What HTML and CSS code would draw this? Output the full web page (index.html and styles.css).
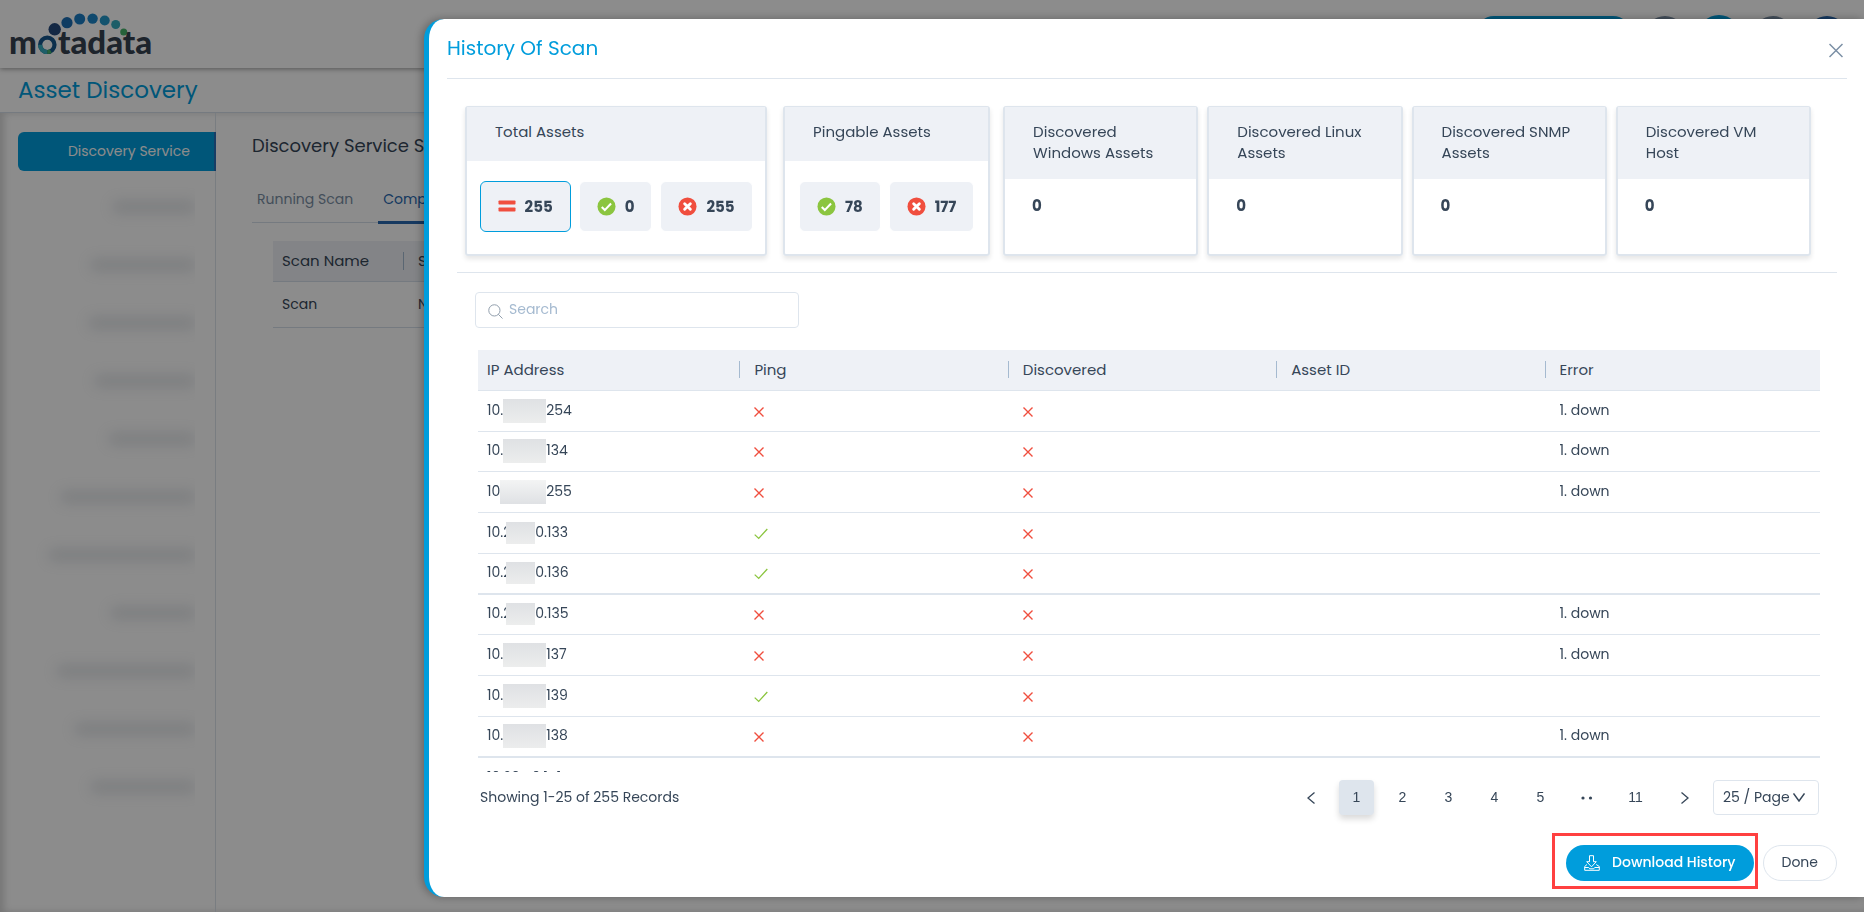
FILE: index.html
```html
<!DOCTYPE html>
<html lang="en">
<head>
<meta charset="utf-8">
<title>Asset Discovery</title>
<link rel="stylesheet" href="styles.css">
</head>
<body>
<svg class="sprite" aria-hidden="true">
  <symbol id="i-x" viewBox="1 1 10 10"><path d="M1.500 1.500l9 9M10.500 1.500l-9 9" fill="none" stroke="currentColor" stroke-width="1.400"/></symbol>
  <symbol id="i-check" viewBox="0 0 14 12"><path d="M.7 6.600l4 3.800L13.300 1" fill="none" stroke="currentColor" stroke-width="1.300"/></symbol>
  <symbol id="i-ok" viewBox="0 0 20 20"><circle cx="10" cy="10" r="9.500" fill="#8bc53f"/><path d="M5 10.600l3.200 3.200 6.600-7" fill="none" stroke="#fff" stroke-width="2.200"/></symbol>
  <symbol id="i-bad" viewBox="0 0 20 20"><circle cx="10" cy="10" r="9.500" fill="#f04e3e"/><path d="M7 7l6 6M13 7l-6 6" fill="none" stroke="#fff" stroke-width="3" stroke-linecap="round"/></symbol>
  <symbol id="i-eq" viewBox="0 0 18 12"><rect x=".5" y=".5" width="17" height="4" rx=".8" fill="#f04e3e"/><rect x=".5" y="7.500" width="17" height="4" rx=".8" fill="#f04e3e"/></symbol>
</svg>

<div class="app">
  <header class="topbar">
    <svg class="logo" viewBox="0 0 150 48" role="img" aria-label="motadata">
      <circle cx="45.700" cy="21.300" r="6.200" fill="#264a7c"/><circle cx="58" cy="14.700" r="5.600" fill="#1c6db3"/>
      <circle cx="70.700" cy="11" r="5.500" fill="#1b7cc4"/><circle cx="83.600" cy="10.600" r="5.200" fill="#1d86c8"/>
      <circle cx="95.700" cy="12.500" r="5" fill="#2497c9"/><circle cx="106.700" cy="16.500" r="4.500" fill="#35abbd"/>
      <circle cx="114.700" cy="24" r="3.500" fill="#45b26b"/>
      <text class="logo-text" x="0" y="46">m</text>
      <circle cx="38.300" cy="36.800" r="7.200" fill="none" stroke="#17568c" stroke-width="4.200"/>
      <path d="M31.100 36.800a7.200 7.200 0 0 0 7.200 7.200" fill="none" stroke="#35abbd" stroke-width="4.200"/>
      <path d="M38.300 44a7.200 7.200 0 0 0 3.500-.9" fill="none" stroke="#45b26b" stroke-width="4.200"/>
      <text class="logo-text" x="49" y="46">tadata</text>
    </svg>
    <div class="tools"><span class="pill"></span><span class="dot slate"></span><span class="dot teal"></span><span class="dot slate"></span><span class="dot navy"></span></div>
  </header>
  <h1 class="page-title">Asset Discovery</h1>
  <div class="body">
    <nav class="side">
      <a class="side-active" href="#">Discovery Service</a>
      <ul class="veiled">
        <li style="width:82px"></li><li style="width:104px"></li><li style="width:106px"></li><li style="width:100px"></li><li style="width:86px"></li><li style="width:134px"></li><li style="width:146px"></li><li style="width:84px"></li><li style="width:138px"></li><li style="width:120px"></li><li style="width:104px"></li>
      </ul>
    </nav>
    <main class="content">
      <h2>Discovery Service Scan</h2>
      <div class="tabs"><a href="#">Running Scan</a><a class="on" href="#">Completed Scan</a></div>
      <table class="scans">
        <thead><tr><th>Scan Name</th><th>Status</th></tr></thead>
        <tbody><tr><td>Scan</td><td>New</td></tr></tbody>
      </table>
    </main>
  </div>
</div>
<div class="shade"></div>

<section class="drawer" role="dialog" aria-labelledby="drawer-title">
  <header class="drawer-head">
    <h2 id="drawer-title">History Of Scan</h2>
    <button class="close" aria-label="Close"><svg viewBox="0 0 14 14"><path d="M.5 .5l13 13M13.500 .5l-13 13" fill="none" stroke="currentColor" stroke-width="1.500"/></svg></button>
  </header>

  <div class="cards">
    <article class="card total"><h3>Total Assets</h3><div class="chips">
      <button class="chip on"><svg class="eq"><use href="#i-eq"/></svg>255</button>
      <button class="chip"><svg><use href="#i-ok"/></svg>0</button>
      <button class="chip"><svg><use href="#i-bad"/></svg>255</button></div></article>
    <article class="card pingable"><h3>Pingable Assets</h3><div class="chips">
      <button class="chip"><svg><use href="#i-ok"/></svg>78</button>
      <button class="chip"><svg><use href="#i-bad"/></svg>177</button></div></article>
    <article class="card"><h3>Discovered Windows Assets</h3><p>0</p></article>
    <article class="card"><h3>Discovered Linux Assets</h3><p>0</p></article>
    <article class="card"><h3>Discovered SNMP Assets</h3><p>0</p></article>
    <article class="card"><h3>Discovered VM Host</h3><p>0</p></article>
  </div>

  <div class="records">
    <label class="search"><svg viewBox="0 0 16 16"><circle cx="6.800" cy="6.800" r="6" fill="none" stroke="currentColor"/><path d="M11 11l4.500 4.500" stroke="currentColor" fill="none"/></svg><input type="text" placeholder="Search" aria-label="Search"></label>

    <div class="table-wrap">
      <table class="grid">
        <thead><tr><th>IP Address</th><th>Ping</th><th>Discovered</th><th>Asset ID</th><th>Error</th></tr></thead>
        <tbody>
          <tr><td>10.<i class="veil"></i>254</td><td><svg class="no"><use href="#i-x"/></svg></td><td><svg class="no"><use href="#i-x"/></svg></td><td></td><td>1. down</td></tr>
          <tr><td>10.<i class="veil"></i>134</td><td><svg class="no"><use href="#i-x"/></svg></td><td><svg class="no"><use href="#i-x"/></svg></td><td></td><td>1. down</td></tr>
          <tr><td>10<i class="veil wide"></i>255</td><td><svg class="no"><use href="#i-x"/></svg></td><td><svg class="no"><use href="#i-x"/></svg></td><td></td><td>1. down</td></tr>
          <tr><td>10.2<i class="veil short"></i>0.133</td><td><svg class="yes"><use href="#i-check"/></svg></td><td><svg class="no"><use href="#i-x"/></svg></td><td></td><td></td></tr>
          <tr><td>10.2<i class="veil short"></i>0.136</td><td><svg class="yes"><use href="#i-check"/></svg></td><td><svg class="no"><use href="#i-x"/></svg></td><td></td><td></td></tr>
          <tr><td>10.2<i class="veil short"></i>0.135</td><td><svg class="no"><use href="#i-x"/></svg></td><td><svg class="no"><use href="#i-x"/></svg></td><td></td><td>1. down</td></tr>
          <tr><td>10.<i class="veil"></i>137</td><td><svg class="no"><use href="#i-x"/></svg></td><td><svg class="no"><use href="#i-x"/></svg></td><td></td><td>1. down</td></tr>
          <tr><td>10.<i class="veil"></i>139</td><td><svg class="yes"><use href="#i-check"/></svg></td><td><svg class="no"><use href="#i-x"/></svg></td><td></td><td></td></tr>
          <tr><td>10.<i class="veil"></i>138</td><td><svg class="no"><use href="#i-x"/></svg></td><td><svg class="no"><use href="#i-x"/></svg></td><td></td><td>1. down</td></tr>
          <tr><td>10.20.40.141</td><td></td><td></td><td></td><td></td></tr>
        </tbody>
      </table>
    </div>

    <div class="pager">
      <span class="count">Showing 1-25 of 255 Records</span>
      <div class="pages">
        <button aria-label="Previous page"><svg viewBox="0 0 8 12"><path d="M7.500 .5L1 6l6.500 5.500" fill="none" stroke="currentColor" stroke-width="1.300"/></svg></button>
        <button class="on">1</button><button>2</button><button>3</button><button>4</button><button>5</button>
        <button aria-label="More pages"><svg class="more" viewBox="0 0 12 4"><circle cx="2" cy="2" r="1.600" fill="currentColor"/><circle cx="9.500" cy="2" r="1.600" fill="currentColor"/></svg></button>
        <button class="last">11</button>
        <button aria-label="Next page"><svg viewBox="0 0 8 12"><path d="M.5 .5L7 6 .5 11.500" fill="none" stroke="currentColor" stroke-width="1.300"/></svg></button>
      </div>
      <div class="size"><select aria-label="Page size"><option>25 / Page</option></select><svg viewBox="0 0 12 9"><path d="M.5 .5L6 8 11.500 .5" fill="none" stroke="currentColor" stroke-width="1.500"/></svg></div>
    </div>
  </div>

  <footer class="actions">
    <div class="marked"><button class="download"><svg viewBox="0 0 16 16"><path d="M5.500 .7h4v6h2.800L7.500 11.800 2.700 6.700h2.800zM3 9.500L.7 11.500v3.800h14.600v-3.800L12.200 9.500M.7 12.500h4l1 1.300h4l1-1.300h4.600" fill="none" stroke="currentColor"/></svg>Download History</button></div>
    <button class="done">Done</button>
  </footer>
</section>
</body>
</html>
```
FILE: styles.css
```css
* { box-sizing: border-box; }
body { margin: 0; font: 14px/21px Poppins, Inter, "Noto Sans", sans-serif; color: #364658; background: #fff; }
h1, h2, h3, p, ul { margin: 0; padding: 0; font-weight: 400; }
button, input, select { font: inherit; color: inherit; }
button { cursor: pointer; padding: 0; border: 0; background: none; }
a { text-decoration: none; color: inherit; }
svg { flex: none; }
.sprite { position: absolute; width: 0; height: 0; }

.app { display: flex; flex-direction: column; height: 100vh; overflow: hidden; isolation: isolate; }
.topbar { display: flex; justify-content: space-between; flex: none; height: 68px; padding: 8px 17px 0 9px; box-shadow: 0 1px 5px rgba(0, 0, 0, .4); z-index: 1; }
.logo { width: 150px; height: 48px; overflow: visible; }
.logo-text { font: 900 33px Lato, sans-serif; fill: #364250; }
.tools { display: flex; align-items: flex-start; gap: 14px; padding-top: 8px; }
.pill { width: 155px; height: 36px; border-radius: 18px; background: #009ddc; }
.dot { width: 40px; height: 40px; border-radius: 50%; }
.slate { background: #7b8fa5; }
.teal { width: 42px; height: 42px; margin: -1px; background: #009ddc; }
.navy { background: #2868b0; }
.page-title { flex: none; height: 45px; padding: 7px 18px; font-size: 23px; line-height: 30px; color: #009ddc; border-bottom: 1px solid #d5dfea; }
.body { display: flex; flex: 1; box-shadow: inset 4px 0 7px rgba(0, 0, 0, .16); }
.side { flex: none; width: 216px; padding: 19px 0 0 18px; border-right: 1px solid #dde4ec; }
.side-active { display: block; height: 39px; margin-right: -1px; padding: 0 24px; line-height: 38px; text-align: right; color: #fff; background: #009ddc; border-right: 2px solid #2b70b8; border-radius: 6px 0 0 6px; }
.veiled { display: flex; flex-direction: column; align-items: flex-end; gap: 46px; margin-right: 20px; padding: 30px 0; list-style: none; overflow: hidden; }
.veiled li { height: 12px; background: #8d98a5; opacity: .26; filter: blur(7px); }
.content { flex: 1; padding: 20px 36px; }
.content h2 { font-size: 18px; line-height: 26px; }
.tabs { display: flex; height: 52px; margin-top: 12px; border-bottom: 1px solid #d5dfea; }
.tabs a { padding: 18px 5px 0; margin-right: 20px; color: #7b8fa5; }
.tabs .on { height: 53px; color: #2868b0; border-bottom: 3px solid #2868b0; }
.scans { width: calc(100% - 42px); margin: 18px 21px; border-collapse: separate; border-spacing: 0; table-layout: fixed; }
.scans th, .scans td { height: 41px; padding: 0 9px; text-align: left; font-weight: 400; border-bottom: 1px solid #d5dfea; }
.scans td { height: 46px; }
.scans th { padding-bottom: 2px; font-size: 15px; background: #eef1f6; }
.scans th:first-child { width: 136px; }
.scans th:first-child::after { content: ""; float: right; height: 18px; margin: 2px -4px 0 0; border-left: 1px solid #a5bad0; }
.shade { position: fixed; inset: 0; background: rgba(0, 0, 0, .45); }

.drawer { position: fixed; top: 19px; right: 0; bottom: 15px; left: 424px; display: flex; flex-direction: column; padding-left: 18px; background: #fff; border-left: 5px solid #009ddc; border-radius: 20px 0 0 20px; box-shadow: -2px 0 10px rgba(0, 0, 0, .3); }
.drawer-head { display: flex; justify-content: space-between; flex: none; height: 60px; margin-right: 17px; padding: 15px 4px 0 0; border-bottom: 1px solid #dee5ed; }
.drawer-head h2 { font-size: 20px; line-height: 28px; color: #009ddc; }
.close { display: flex; height: 32px; align-items: center; color: #7b8fa5; }
.close svg { width: 14px; height: 15px; }

.cards { display: flex; gap: 9px; flex: none; height: 194px; margin: 0 27px 0 10px; padding: 27px 26px 16px 8px; border-bottom: 1px solid #dee5ed; }
.card { flex: 195; min-width: 0; height: 150px; border: 2px solid #dee5ed; border-top-width: 1px; border-radius: 3px; box-shadow: 0 3px 5px rgba(0, 0, 0, .1); }
.card.total { flex: 304; margin-right: 7px; }
.card.pingable { flex: 207; margin-right: 4px; }
.card h3 { height: 72px; padding: 14px 28px; font-size: 15px; line-height: 21px; background: #eef1f6; }
.card.total h3, .card.pingable h3 { height: 54px; }
.card p { padding: 16px 27px; font-size: 15px; font-weight: 700; }
.chips { display: flex; justify-content: center; gap: 8px; padding-top: 20px; }
.chip { display: flex; align-items: center; gap: 9px; height: 51px; padding: 0 17px 1px; font-size: 15px; font-weight: 700; background: #eef1f6; border: 1px solid #fff; border-radius: 6px; }
.chip.on { border-color: #009ddc; }
.chip svg { width: 19px; height: 19px; }
.chip .eq { width: 18px; height: 12px; }

.records { display: flex; flex: 1; flex-direction: column; min-height: 0; margin: 0 44px 0 28px; padding-top: 19px; }
.search { display: flex; align-items: center; gap: 6px; flex: none; width: 324px; height: 36px; padding: 0 12px; border: 1px solid #dee5ed; border-radius: 4px; color: #8a97a6; }
.search svg { width: 15px; height: 15px; margin-top: 2px; }
.search input { flex: 1; min-width: 0; border: 0; padding: 0 0 2px; outline: 0; }
.search input::placeholder { color: #a5bad0; opacity: 1; }
.table-wrap { flex: 1; min-height: 0; margin: 22px 0 0 3px; overflow: hidden; }
.grid { width: 100%; border-collapse: separate; border-spacing: 0; table-layout: fixed; }
.grid th, .grid td { height: 41px; padding: 0 9px 2px; text-align: left; border-bottom: 1px solid #dee5ed; }
.grid th + th, .grid td + td { padding-left: 8px; }
.grid th { position: relative; font-size: 15px; font-weight: 400; background: #eef1f6; }
.grid th + th::before { content: ""; position: absolute; left: -7px; top: 11px; height: 17px; border-left: 1px solid #a5bad0; }
.grid tr:nth-child(4n+2) td { height: 40px; }
.grid tr:nth-child(4n+5) td { border-bottom-width: 2px; }
.grid tr:last-child td { height: 41px; }
.grid svg { display: block; height: 12px; margin-top: 3px; }
.no { width: 10px; color: #f04e3e; }
.yes { width: 14px; color: #8bc53f; }
.veil { display: inline-block; width: 43px; height: 24px; margin: -4px 0; vertical-align: middle; background: linear-gradient(#dfe1e4, #eceded); }
.veil.wide { width: 46px; background: linear-gradient(#f3f4f4, #dfe1e4); }
.veil.short { position: relative; width: 29px; height: 22px; margin: -3px 0 -3px -5px; }
.pager { display: flex; align-items: center; flex: none; height: 35px; margin: 8px 1px 0 5px; }
.count { flex: 1; }
.pages { display: flex; gap: 11px; margin-right: 11px; font-family: "Liberation Sans", sans-serif; }
.pages button { width: 35px; height: 35px; display: flex; align-items: center; justify-content: center; border-radius: 4px; }
.pages .on { background: #dee5ed; box-shadow: 0 4px 6px rgba(0, 0, 0, .15); }
.pages .last { width: 41px; }
.pages svg { width: 8px; height: 12px; }
.pages .more { width: 12px; height: 4px; }
.size { display: flex; align-items: center; width: 106px; height: 35px; padding: 0 13px 0 9px; border: 1px solid #dee5ed; border-radius: 4px; }
.size select { flex: 1; min-width: 0; padding: 0; appearance: none; border: 0; background: none; outline: 0; }
.size svg { width: 12px; height: 9px; }
.actions { display: flex; align-items: flex-end; justify-content: flex-end; gap: 5px; flex: none; margin: 18px 27px 8px 0; }
.marked { padding: 9px 1px 5px 11px; border: 3px solid #ff4040; }
.download { display: flex; align-items: center; gap: 12px; height: 36px; padding: 0 18px 1px; font-weight: 500; color: #fff; background: #009ddc; border-radius: 18px; }
.download svg { width: 16px; height: 16px; }
.done { height: 36px; margin-bottom: 8px; padding: 0 18px 1px; border: 1px solid #dee5ed; border-radius: 18px; }
```
